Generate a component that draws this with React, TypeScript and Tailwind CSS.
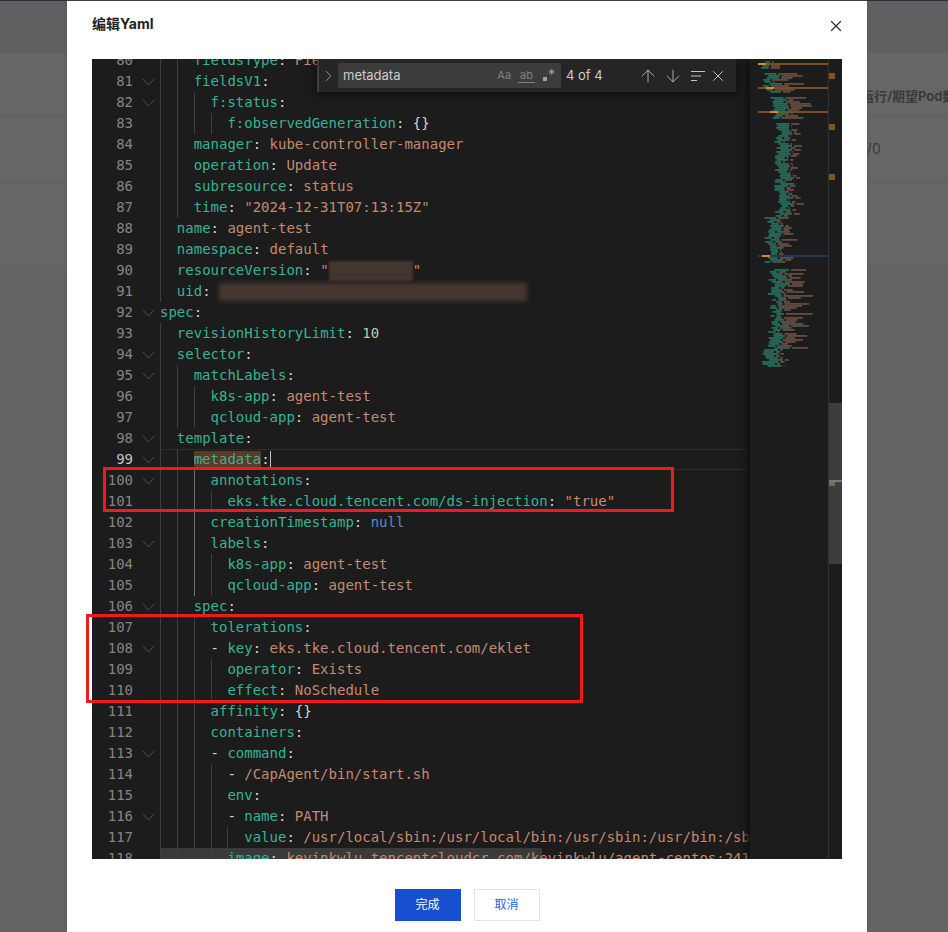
import React from "react";
import { ArrowDown, ArrowUp, ChevronRight, X } from "lucide-react";

type CodeLine = {
  n: number;
  i: number;
  k?: string;
  v?: string;
  t?: "null" | "num" | "plain";
  dash?: boolean;
  fold?: boolean;
  hidden?: "version" | "uid";
};

const LINES: CodeLine[] = [
  { n: 80, i: 4, k: "fieldsType", v: "FieldsV1" },
  { n: 81, i: 4, k: "fieldsV1", fold: true },
  { n: 82, i: 6, k: "f:status", fold: true },
  { n: 83, i: 8, k: "f:observedGeneration", v: "{}", t: "plain" },
  { n: 84, i: 4, k: "manager", v: "kube-controller-manager" },
  { n: 85, i: 4, k: "operation", v: "Update" },
  { n: 86, i: 4, k: "subresource", v: "status" },
  { n: 87, i: 4, k: "time", v: '"2024-12-31T07:13:15Z"' },
  { n: 88, i: 2, k: "name", v: "agent-test" },
  { n: 89, i: 2, k: "namespace", v: "default" },
  { n: 90, i: 2, k: "resourceVersion", hidden: "version" },
  { n: 91, i: 2, k: "uid", hidden: "uid" },
  { n: 92, i: 0, k: "spec", fold: true },
  { n: 93, i: 2, k: "revisionHistoryLimit", v: "10", t: "num" },
  { n: 94, i: 2, k: "selector", fold: true },
  { n: 95, i: 4, k: "matchLabels", fold: true },
  { n: 96, i: 6, k: "k8s-app", v: "agent-test" },
  { n: 97, i: 6, k: "qcloud-app", v: "agent-test" },
  { n: 98, i: 2, k: "template", fold: true },
  { n: 99, i: 4, k: "metadata", fold: true },
  { n: 100, i: 6, k: "annotations", fold: true },
  { n: 101, i: 8, k: "eks.tke.cloud.tencent.com/ds-injection", v: '"true"' },
  { n: 102, i: 6, k: "creationTimestamp", v: "null", t: "null" },
  { n: 103, i: 6, k: "labels", fold: true },
  { n: 104, i: 8, k: "k8s-app", v: "agent-test" },
  { n: 105, i: 8, k: "qcloud-app", v: "agent-test" },
  { n: 106, i: 4, k: "spec", fold: true },
  { n: 107, i: 6, k: "tolerations" },
  { n: 108, i: 6, dash: true, k: "key", v: "eks.tke.cloud.tencent.com/eklet", fold: true },
  { n: 109, i: 8, k: "operator", v: "Exists" },
  { n: 110, i: 8, k: "effect", v: "NoSchedule" },
  { n: 111, i: 6, k: "affinity", v: "{}", t: "plain" },
  { n: 112, i: 6, k: "containers" },
  { n: 113, i: 6, dash: true, k: "command", fold: true },
  { n: 114, i: 8, dash: true, v: "/CapAgent/bin/start.sh" },
  { n: 115, i: 8, k: "env" },
  { n: 116, i: 8, dash: true, k: "name", v: "PATH", fold: true },
  { n: 117, i: 10, k: "value", v: "/usr/local/sbin:/usr/local/bin:/usr/sbin:/usr/bin:/sbin:/bin" },
  { n: 118, i: 8, k: "image", v: "kevinkwlu.tencentcloudcr.com/kevinkwlu/agent-centos:241231" },
];

// rows, x, teal length, value length
const MINI_SECTIONS = [
  [4, 8, 10, 12],
  [2, 8, 0, 0],
  [10, 13, 14, 22],
  [2, 8, 0, 0],
  [11, 18, 16, 22],
  [2, 8, 0, 0],
  [47, 24, 14, 8],
  [23, 14, 14, 16],
  [3, 8, 0, 0],
  [13, 17, 16, 24],
  [15, 20, 10, 30],
  [12, 17, 16, 24],
  [9, 12, 18, 6],
];

const rand = (i: number) => Math.abs(Math.sin(i * 12.9898) * 43758.5453) % 1;

const Minimap = () => {
  let row = 0;
  const rects: React.ReactNode[] = [];
  MINI_SECTIONS.forEach(([rows, x, teal, value]) => {
    for (let j = 0; j < rows; j++) {
      row++;
      if (!teal) continue;
      const y = row * 2;
      const start = x + rand(row) * 8;
      const tealW = teal * (0.4 + rand(row + 50) * 0.6);
      const valueW = value * rand(row + 90);
      rects.push(<rect key={`t${row}`} x={start} y={y} width={tealW} height={1.8} fill="#24806c" opacity={0.8} />);
      rects.push(<rect key={`v${row}`} x={start + tealW + 2} y={y} width={valueW} height={1.8} fill="#75574a" opacity={0.8} />);
    }
  });
  return (
    <svg width="78" height="800" className="block">
      <g className="blur-[0.4px]">{rects}</g>
      <rect x="8" y="4" width="70" height="2" fill="#7a4f1d" />
      <rect x="8" y="4" width="8" height="2" fill="#d98a20" />
      <rect x="8" y="28" width="70" height="2" fill="#7a4f1d" />
      <rect x="16" y="28" width="8" height="2" fill="#d98a20" />
      <rect x="8" y="52" width="70" height="2" fill="#7a4f1d" />
      <rect x="20" y="52" width="8" height="2" fill="#d98a20" />
      <rect x="8" y="196" width="70" height="2" fill="#1d3a55" />
      <rect x="12" y="196" width="8" height="2" fill="#d98a20" />
    </svg>
  );
};

const FoldIcon = () => (
  <svg width="13" height="8" viewBox="0 0 13 8" fill="none" stroke="#4f4f4f" strokeWidth="1">
    <path d="M1 1l5.5 6L12 1" />
  </svg>
);

const Guides = ({ line }: { line: CodeLine }) => (
  <>
    {Array.from({ length: line.i / 2 }).map((_, idx) => (
      <span
        key={idx}
        className={
          idx === 2 && line.n >= 100 && line.n <= 105
            ? "h-[21px] w-[2ch] shrink-0 border-l border-[#707070]"
            : "h-[21px] w-[2ch] shrink-0 border-l border-[#3f3f3f]"
        }
      />
    ))}
  </>
);

const Value = ({ line }: { line: CodeLine }) => {
  if (line.hidden === "version") {
    return (
      <span className="text-[#c58a70]">
        "<span className="inline-block h-[20px] w-[10ch] bg-[#43352f] align-middle blur-[1px]" />"
      </span>
    );
  }
  if (line.hidden === "uid") {
    return <span className="inline-block h-[18px] w-[36.5ch] bg-[#46362f] align-middle blur-[2px]" />;
  }
  if (!line.v) return null;
  if (line.t === "null") return <span className="text-[#4f8fc9]">{line.v}</span>;
  if (line.t === "num") return <span className="text-[#b5cea8]">{line.v}</span>;
  if (line.t === "plain") return <span className="text-[#d4d4d4]">{line.v}</span>;
  return <span className="text-[#c58a70]">{line.v}</span>;
};

const Row = ({ line }: { line: CodeLine }) => {
  const active = line.n === 99;
  const body = (
    <>
      <Guides line={line} />
      <span className="whitespace-pre">
        {line.dash && <span className="text-[#d4d4d4]">- </span>}
        {line.k && (
          <span className={active ? "bg-[#5c3a24] text-[#36b396]" : "text-[#36b396]"}>{line.k}</span>
        )}
        {line.k && (
          <span className={active ? "border-r border-[#c0c0c0] text-[#d4d4d4]" : "text-[#d4d4d4]"}>
            {line.v || line.hidden ? ": " : ":"}
          </span>
        )}
        <Value line={line} />
      </span>
    </>
  );
  return (
    <div className="flex h-[21px] leading-[21px]">
      <div className={active ? "w-[41px] shrink-0 text-right text-[#c6c6c6]" : "w-[41px] shrink-0 text-right text-[#858585]"}>
        {line.n}
      </div>
      <div className="flex w-[27px] shrink-0 items-center justify-center pl-[3px]">{line.fold && <FoldIcon />}</div>
      {line.n === 118 ? (
        <div className="flex w-[382px] shrink-0 bg-[#3a3a3a]">{body}</div>
      ) : (
        <div className={active ? "box-border flex flex-1 border-y border-[#2e2e2e] leading-[19px]" : "flex flex-1"}>{body}</div>
      )}
    </div>
  );
};

const FindWidget = () => (
  <div className="absolute left-[225px] top-0 flex h-[33px] w-[419px] items-center border-l-2 border-[#3f3f3f] bg-[#252526] font-['Inter','Liberation_Sans',sans-serif] shadow-[0_2px_8px_#0a0a0a]">
    <div className="flex w-[19px] justify-center">
      <ChevronRight className="h-5 w-5 text-[#aaaaaa]" strokeWidth={1} />
    </div>
    <div className="flex h-[25px] w-[223px] items-center bg-[#3c3c3c] pl-[5px] text-[13px] text-[#cccccc]">
      <span className="flex-1">metadata</span>
      <span className="mr-[7px] text-[11px] text-[#808080]">Aa</span>
      <span className="mr-[8px] border-b border-[#808080] px-[2px] text-[11px] leading-[13px] text-[#808080]">ab</span>
      <span className="mr-[5px] flex w-[13px] items-center text-[14px] leading-[14px] text-[#a0a0a0]">
        <span className="mt-[7px] h-[4px] w-[4px] shrink-0 bg-[#a0a0a0]" />
        <span className="ml-[1px] mt-[-1px]">*</span>
      </span>
    </div>
    <span className="ml-[5px] w-[72px] text-[13px] text-[#cccccc]">4 of 4</span>
    <ArrowUp className="h-5 w-5 text-[#c5c5c5]" strokeWidth={1} />
    <ArrowDown className="ml-[5px] h-5 w-5 text-[#c5c5c5]" strokeWidth={1} />
    <svg width="16" height="12" viewBox="0 0 16 12" fill="none" stroke="#c5c5c5" strokeWidth="1" className="ml-[7px]">
      <path d="M1 1.5h14M1 6h10M1 10.5h6" />
    </svg>
    <X className="ml-[3px] h-[18px] w-[18px] text-[#c5c5c5]" strokeWidth={1.25} />
  </div>
);

const Ruler = () => (
  <div className="relative w-[14px] shrink-0 border-l border-[#333333]">
    <div className="absolute left-0 top-[344px] h-[161px] w-full bg-[#3d3d3d]" />
    <div className="absolute left-0 top-[14px] h-[6px] w-[6px] bg-[#7d551f]" />
    <div className="absolute left-0 top-[65px] h-[6px] w-[6px] bg-[#7d551f]" />
    <div className="absolute left-0 top-[115px] h-[6px] w-[6px] bg-[#7d551f]" />
    <div className="absolute left-0 top-[421px] h-[2px] w-full bg-[#777777]" />
    <div className="absolute left-0 top-[423px] h-[4px] w-[6px] bg-[#7f6a4a]" />
  </div>
);

const Editor = () => (
  <div className="relative mx-[25px] flex h-[800px] w-[750px] overflow-hidden bg-[#1c1c1c] font-['DejaVu_Sans_Mono',monospace] text-[14px]">
    <div className="w-[658px] shrink-0 overflow-hidden">
      <div className="-mt-[9px]">
        {LINES.map((line) => (
          <Row key={line.n} line={line} />
        ))}
      </div>
    </div>
    <div className="w-[78px] shrink-0 shadow-[-6px_0_6px_-2px_#111111]">
      <Minimap />
    </div>
    <Ruler />
    <FindWidget />
  </div>
);

export default function App() {
  return (
    <div className="relative h-[932px] w-full overflow-hidden bg-[#636466] font-['Inter','Noto_Sans_CJK_SC',sans-serif] text-[14px]">
      {/* page behind the dialog */}
      <div className="h-px bg-[#2b2f38]" />
      <div className="h-[52px] bg-[#5f6062]" />
      <div className="bg-[#666667] text-[#3a3a3a]">
        <div className="h-[63px] whitespace-nowrap border-b border-[#5e5e5e] pl-[861px] pt-[33px] text-[13px] font-bold leading-[20px]">运行/期望Pod数</div>
        <div className="h-[67px] border-b border-[#5e5e5e] pl-[858px] pt-[23px] leading-[20px]">0/0</div>
        <div className="h-[81px]" />
      </div>

      {/* dialog */}
      <div className="absolute left-[67px] top-px flex h-[931px] w-[800px] flex-col bg-white shadow-[0_0_3px_#555555]">
        <div className="flex h-[58px] shrink-0 items-start justify-between px-[25px] pt-[13px]">
          <span className="font-bold leading-[20px] text-[#222222]">编辑Yaml</span>
          <X className="mr-[-3px] mt-[3px] h-[18px] w-[18px] text-[#333333]" strokeWidth={1.75} />
        </div>
        <Editor />
        <div className="mt-[30px] flex justify-center gap-[13px] text-[12px]">
          <button type="button" className="h-[32px] w-[66px] bg-[#174fd0] text-white">
            完成
          </button>
          <button type="button" className="h-[32px] w-[66px] border border-[#dfe4ee] bg-white text-[#2b5fd9]">
            取消
          </button>
        </div>
      </div>

      {/* review marks drawn over the screenshot */}
      <div className="absolute left-[103px] top-[467px] h-[45px] w-[571px] border-[3px] border-[#ee1c1c]" />
      <div className="absolute left-[86px] top-[614px] h-[89px] w-[497px] border-[3px] border-[#ee1c1c]" />
    </div>
  );
}
